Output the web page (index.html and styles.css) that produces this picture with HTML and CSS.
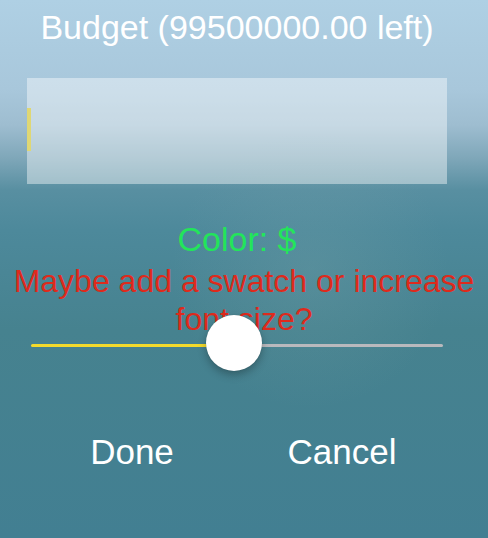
FILE: index.html
```html
<!DOCTYPE html>
<html>
<head>
<meta charset="utf-8">
<link rel="stylesheet" href="styles.css">
</head>
<body>
<div class="screen">
  <div class="glow"></div>
  <h1 class="title">Budget (99500000.00 left)</h1>
  <div class="field"><span class="cursor"></span></div>
  <div class="color">Color: $</div>
  <div class="note">Maybe add a swatch or increase font size?</div>
  <div class="slider">
    <div class="track-min"></div>
    <div class="track-max"></div>
    <div class="thumb"></div>
  </div>
  <div class="buttons">
    <div class="btn">Done</div>
    <div class="btn">Cancel</div>
  </div>
</div>
</body>
</html>
```
FILE: styles.css
```css
html, body {
  margin: 0;
  padding: 0;
}
body {
  width: 488px;
  height: 538px;
  overflow: hidden;
  font-family: "Liberation Sans", Arial, sans-serif;
}
.screen {
  position: relative;
  width: 488px;
  height: 538px;
  display: flex;
  flex-direction: column;
  background: linear-gradient(180deg, #afd0e4 0px, #a8c7db 90px, #9ebdd0 125px, #7fa7b9 158px, #588fa1 190px, #4d899b 230px, #46828f 330px, #427f92 538px);
  overflow: hidden;
}
.glow {
  position: absolute;
  left: 170px;
  top: 130px;
  width: 280px;
  height: 280px;
  border-radius: 50%;
  background: radial-gradient(circle, rgba(125,165,170,0.25) 0%, rgba(125,165,170,0) 70%);
  pointer-events: none;
}
.title {
  position: relative;
  margin: 7px 41px 0 27px;
  font-size: 34px;
  font-weight: normal;
  line-height: 40px;
  color: #ffffff;
  text-align: center;
  white-space: nowrap;
}
.field {
  position: relative;
  margin: 31px 41px 0 27px;
  height: 106px;
  background: rgba(255,255,255,0.42);
  display: flex;
  align-items: center;
}
.cursor {
  width: 4px;
  height: 43px;
  background: #dfd774;
  margin-top: -3px;
}
.color {
  position: relative;
  margin: 35px 41px 0 27px;
  font-size: 34px;
  line-height: 40px;
  color: #22e55a;
  text-align: center;
}
.note {
  position: relative;
  margin-top: 3px;
  font-size: 32px;
  line-height: 38px;
  color: #de2a1c;
  text-align: center;
}
.slider {
  position: relative;
  margin: 2px 45px 0 31px;
  height: 10px;
  display: flex;
  align-items: center;
}
.track-min {
  width: 203px;
  height: 3px;
  border-radius: 2px 0 0 2px;
  background: #f3da2c;
}
.track-max {
  flex: 1;
  height: 3px;
  border-radius: 0 2px 2px 0;
  background: #b9b9bd;
}
.thumb {
  position: absolute;
  left: 175px;
  top: -25px;
  width: 56px;
  height: 56px;
  border-radius: 50%;
  background: #ffffff;
  box-shadow: 0 4px 8px rgba(0,0,0,0.28), 0 0 1px rgba(0,0,0,0.2);
}
.buttons {
  position: relative;
  margin: 82px 41px 0 27px;
  display: grid;
  grid-template-columns: 1fr 1fr;
}
.btn {
  font-size: 35px;
  line-height: 40px;
  color: #ffffff;
  text-align: center;
}
```
